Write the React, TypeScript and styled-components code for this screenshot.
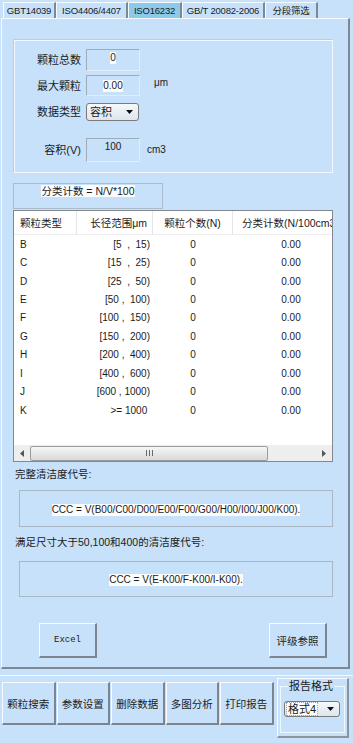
import styled, { createGlobalStyle } from "styled-components";

const BG = "#c7e1fa";

const GlobalStyle = createGlobalStyle`
  html, body { margin: 0; padding: 0; background: ${BG}; }
  body {
    font-family: "Liberation Sans", "Noto Sans CJK SC", sans-serif;
    font-size: 10.5px;
    color: #1b1b1b;
  }
  * { box-sizing: border-box; }
`;

const tabs = [
  { label: "GBT14039", w: 53 },
  { label: "ISO4406/4407", w: 72 },
  { label: "ISO16232", w: 54, active: true },
  { label: "GB/T 20082-2006", w: 83 },
  { label: "分段筛选", w: 53 },
];

const rows = [
  ["B", "[5  ,  15)"],
  ["C", "[15  ,  25)"],
  ["D", "[25  ,  50)"],
  ["E", "[50 ,  100)"],
  ["F", "[100 ,  150)"],
  ["G", "[150 ,  200)"],
  ["H", "[200 ,  400)"],
  ["I", "[400 ,  600)"],
  ["J", "[600 , 1000)"],
  ["K", ">= 1000 "],
];

const toolButtons = ["颗粒搜索", "参数设置", "删除数据", "多图分析", "打印报告"];

function Caret() {
  return (
    <svg width="7" height="4" viewBox="0 0 7 4">
      <polygon points="0,0 7,0 3.5,4" fill="#111" />
    </svg>
  );
}

function ScrollTriangle({ dir }: { dir: "left" | "right" }) {
  return (
    <svg width="4" height="7" viewBox="0 0 4 7">
      {dir === "left" ? (
        <polygon points="4,0 4,7 0,3.5" fill="#555" />
      ) : (
        <polygon points="0,0 0,7 4,3.5" fill="#555" />
      )}
    </svg>
  );
}

export default function App() {
  return (
    <Window>
      <GlobalStyle />
      <TabBar>
        {tabs.map((t) => (
          <Tab key={t.label} $w={t.w} $active={t.active}>
            {t.label}
          </Tab>
        ))}
      </TabBar>

      <Panel>
        <GroupBox>
          <FieldRow $h={22} $mt={0}>
            <FieldLabel>颗粒总数</FieldLabel>
            <TextBox $top>
              <Hi>0</Hi>
            </TextBox>
          </FieldRow>
          <FieldRow $h={21} $mt={4}>
            <FieldLabel>最大颗粒</FieldLabel>
            <TextBox>
              <Hi>0.00</Hi>
            </TextBox>
            <Unit $ml={9} $dy={-3}>
              μm
            </Unit>
          </FieldRow>
          <FieldRow $h={18} $mt={7}>
            <FieldLabel>数据类型</FieldLabel>
            <Combo $w={53}>
              <ComboText>容积</ComboText>
              <Caret />
            </Combo>
          </FieldRow>
          <FieldRow $h={24} $mt={17}>
            <FieldLabel>容积(V)</FieldLabel>
            <TextBox $top>100</TextBox>
            <Unit $ml={2} $dy={-1}>
              cm3
            </Unit>
          </FieldRow>
        </GroupBox>

        <FormulaBox>
          <Hi>分类计数 = N/V*100</Hi>
        </FormulaBox>

        <ListView>
          <HeaderRow>
            <HeadCell $align="left">颗粒类型</HeadCell>
            <HeadCell $align="right">长径范围μm</HeadCell>
            <HeadCell $align="center">颗粒个数(N)</HeadCell>
            <HeadCell $align="center">分类计数(N/100cm3)</HeadCell>
          </HeaderRow>
          {rows.map(([k, range]) => (
            <DataRow key={k}>
              <Cell $align="left">{k}</Cell>
              <Cell $align="right">{range}</Cell>
              <Cell $align="center">0</Cell>
              <Cell $align="center">0.00</Cell>
            </DataRow>
          ))}
          <Filler />
          <HScroll>
            <ScrollBtn>
              <ScrollTriangle dir="left" />
            </ScrollBtn>
            <Thumb>
              <Grip />
              <Grip />
              <Grip />
            </Thumb>
            <Filler />
            <ScrollBtn>
              <ScrollTriangle dir="right" />
            </ScrollBtn>
          </HScroll>
        </ListView>

        <Caption $mt={5}>完整清洁度代号:</Caption>
        <CodeBox $mt={9} $h={37}>
          <Hi>CCC = V(B00/C00/D00/E00/F00/G00/H00/I00/J00/K00).</Hi>
        </CodeBox>

        <Caption $mt={8}>满足尺寸大于50,100和400的清洁度代号:</Caption>
        <CodeBox $mt={12} $h={36}>
          <Hi>CCC = V(E-K00/F-K00/I-K00).</Hi>
        </CodeBox>

        <ButtonRow>
          <PanelButton $mono>Excel</PanelButton>
          <PanelButton>评级参照</PanelButton>
        </ButtonRow>
      </Panel>

      <Toolbar>
        {toolButtons.map((b) => (
          <ToolButton key={b}>{b}</ToolButton>
        ))}
        <FormatGroup>
          <FormatSet>
            <FormatLegend>报告格式</FormatLegend>
            <Combo $w={56} $h={16}>
              <ComboText $sel>格式4</ComboText>
              <Caret />
            </Combo>
          </FormatSet>
        </FormatGroup>
      </Toolbar>
    </Window>
  );
}

const Window = styled.div`
  width: 353px;
  height: 743px;
  background: ${BG};
  overflow: hidden;
  display: flex;
  flex-direction: column;
`;

const TabBar = styled.div`
  display: flex;
  height: 18px;
  padding: 2px 0 0 3px;
`;

const Tab = styled.div<{ $w: number; $active?: boolean }>`
  width: ${(p) => p.$w}px;
  height: 16px;
  display: flex;
  align-items: center;
  justify-content: center;
  white-space: nowrap;
  font-size: 9.5px;
  letter-spacing: -0.2px;
  line-height: 1;
  background: ${(p) => (p.$active ? "#8ccae9" : BG)};
  border-top: 1px solid #f5faff;
  border-left: 1px solid #f5faff;
  border-right: 2px solid #7c8894;
`;

const Panel = styled.div`
  margin-left: 1px;
  width: 349px;
  height: 651px;
  border-style: solid;
  border-width: 1px 2px 2px 1px;
  border-color: #f5faff #7f8791 #7f8791 #f5faff;
  padding: 21px 15px 0 11px;
  display: flex;
  flex-direction: column;
`;

const GroupBox = styled.div`
  margin-left: 1px;
  width: 319px;
  height: 133px;
  flex-shrink: 0;
  border: 1px solid #f2f8fe;
  box-shadow: -1px -1px 0 #b9cde0;
  padding: 8px 0 0 1px;
`;

const FieldRow = styled.div<{ $h: number; $mt: number }>`
  display: grid;
  grid-template-columns: 65px 54px auto;
  column-gap: 5px;
  align-items: center;
  height: ${(p) => p.$h}px;
  margin-top: ${(p) => p.$mt}px;
`;

const FieldLabel = styled.div`
  text-align: right;
  font-size: 11px;
  line-height: 14px;
  white-space: nowrap;
`;

const TextBox = styled.div<{ $top?: boolean }>`
  height: 100%;
  display: flex;
  justify-content: center;
  align-items: ${(p) => (p.$top ? "flex-start" : "center")};
  padding-top: ${(p) => (p.$top ? "2px" : "0")};
  border: 1px solid;
  border-color: #9eabb8 #e2edf8 #e2edf8 #9eabb8;
  font-size: 10px;
  line-height: 12px;
`;

const Hi = styled.span`
  background: #fbfcfd;
  white-space: pre;
  line-height: 12px;
`;

const Unit = styled.div<{ $ml: number; $dy: number }>`
  margin-left: ${(p) => p.$ml}px;
  position: relative;
  top: ${(p) => p.$dy}px;
  font-size: 10px;
`;

const Combo = styled.div<{ $w: number; $h?: number }>`
  width: ${(p) => p.$w}px;
  height: ${(p) => p.$h ?? 18}px;
  display: flex;
  align-items: center;
  justify-content: space-between;
  padding: 0 5px 0 2px;
  border: 1px solid #7a7a7a;
  border-radius: 3px;
  background: linear-gradient(#f6f9fc, #dde5ee);
`;

const ComboText = styled.span<{ $sel?: boolean }>`
  font-size: 11px;
  line-height: 12px;
  padding: 0 1px;
  background: ${(p) => (p.$sel ? "#ffffff" : "transparent")};
  outline: ${(p) => (p.$sel ? "1px dotted #9aa" : "none")};
`;

const FormulaBox = styled.div`
  margin-top: 10px;
  width: 150px;
  height: 26px;
  flex-shrink: 0;
  display: flex;
  justify-content: center;
  align-items: flex-start;
  padding-top: 1px;
  border: 1px solid #a9bccd;
  font-size: 10.5px;
`;

const ListView = styled.div`
  margin-top: 1px;
  width: 320px;
  height: 252px;
  flex-shrink: 0;
  border: 1px solid #828790;
  background: #ffffff;
  overflow: hidden;
  display: flex;
  flex-direction: column;
`;

const cols = "63px 76px 80px 116px";

const HeaderRow = styled.div`
  display: grid;
  grid-template-columns: ${cols};
  height: 24px;
  flex-shrink: 0;
  border-bottom: 1px solid #eeeeee;
`;

const HeadCell = styled.div<{ $align: "left" | "right" | "center" }>`
  display: flex;
  align-items: center;
  justify-content: ${(p) =>
    p.$align === "left" ? "flex-start" : p.$align === "right" ? "flex-end" : "center"};
  padding: ${(p) => (p.$align === "left" ? "0 0 0 6px" : p.$align === "right" ? "0 5px 0 0" : "0")};
  border-right: 1px solid #e3e6ea;
  white-space: nowrap;
  font-size: 10.5px;
`;

const DataRow = styled.div`
  display: grid;
  grid-template-columns: ${cols};
  height: 18.45px;
  flex-shrink: 0;
`;

const Cell = styled.div<{ $align: "left" | "right" | "center" }>`
  display: flex;
  align-items: center;
  justify-content: ${(p) =>
    p.$align === "left" ? "flex-start" : p.$align === "right" ? "flex-end" : "center"};
  padding: ${(p) => (p.$align === "left" ? "0 0 0 6px" : p.$align === "right" ? "0 3px 0 0" : "0")};
  white-space: pre;
  font-size: 10px;
`;

const Filler = styled.div`
  flex: 1;
`;

const HScroll = styled.div`
  display: flex;
  align-items: center;
  height: 16px;
  flex-shrink: 0;
  background: #eeeeee;
`;

const ScrollBtn = styled.div`
  width: 16px;
  height: 16px;
  display: flex;
  align-items: center;
  justify-content: center;
`;

const Thumb = styled.div`
  width: 238px;
  height: 15px;
  display: flex;
  align-items: center;
  justify-content: center;
  gap: 2px;
  border: 1px solid #9c9c9c;
  border-radius: 2px;
  background: linear-gradient(#f6f6f6, #d9d9d9);
`;

const Grip = styled.div`
  width: 1px;
  height: 6px;
  background: #6a6a6a;
`;

const Caption = styled.div<{ $mt: number }>`
  margin-top: ${(p) => p.$mt}px;
  padding-left: 2px;
  height: 14px;
  line-height: 14px;
  font-size: 10.5px;
  white-space: nowrap;
`;

const CodeBox = styled.div<{ $mt: number; $h: number }>`
  margin: ${(p) => p.$mt}px 0 0 6px;
  width: 314px;
  height: ${(p) => p.$h}px;
  flex-shrink: 0;
  display: flex;
  align-items: center;
  justify-content: center;
  padding-top: 2px;
  border: 1px solid #aab8c6;
  font-size: 10px;
`;

const ButtonRow = styled.div`
  margin-top: 26px;
  display: flex;
  justify-content: space-between;
  padding: 0 6px 0 26px;
`;

const PanelButton = styled.div<{ $mono?: boolean }>`
  width: 58px;
  height: 35px;
  display: flex;
  align-items: center;
  justify-content: center;
  background: ${BG};
  border-style: solid;
  border-width: 1px 2px 2px 1px;
  border-color: #f7fbff #7c858f #7c858f #f7fbff;
  font-family: ${(p) => (p.$mono ? `"Liberation Mono", monospace` : "inherit")};
  font-size: ${(p) => (p.$mono ? "9px" : "10.5px")};
`;

const Toolbar = styled.div`
  margin-top: 6px;
  border-top: 1px solid #f5faff;
  display: flex;
  align-items: flex-start;
  gap: 1px;
  padding: 2px 0 0 2px;
`;

const ToolButton = styled.div`
  margin-top: 4px;
  width: 53.5px;
  height: 43px;
  flex-shrink: 0;
  display: flex;
  align-items: center;
  justify-content: center;
  background: ${BG};
  border-style: solid;
  border-width: 1px 2px 2px 1px;
  border-color: #f7fbff #7c858f #7c858f #f7fbff;
  font-size: 10.5px;
  white-space: nowrap;
`;

const FormatGroup = styled.div`
  margin-left: 2.5px;
  width: 72px;
  height: 60px;
  border-style: solid;
  border-width: 1px 2px 2px 1px;
  border-color: #f7fbff #8c959f #8c959f #f7fbff;
  padding: 0 2px;
`;

const FormatSet = styled.fieldset`
  margin: 0;
  height: 54px;
  border: 1px solid #eef6fe;
  padding: 8px 0 0 3px;
`;

const FormatLegend = styled.legend`
  margin-left: 4px;
  padding: 0 1px;
  font-size: 11px;
  line-height: 14px;
`;
